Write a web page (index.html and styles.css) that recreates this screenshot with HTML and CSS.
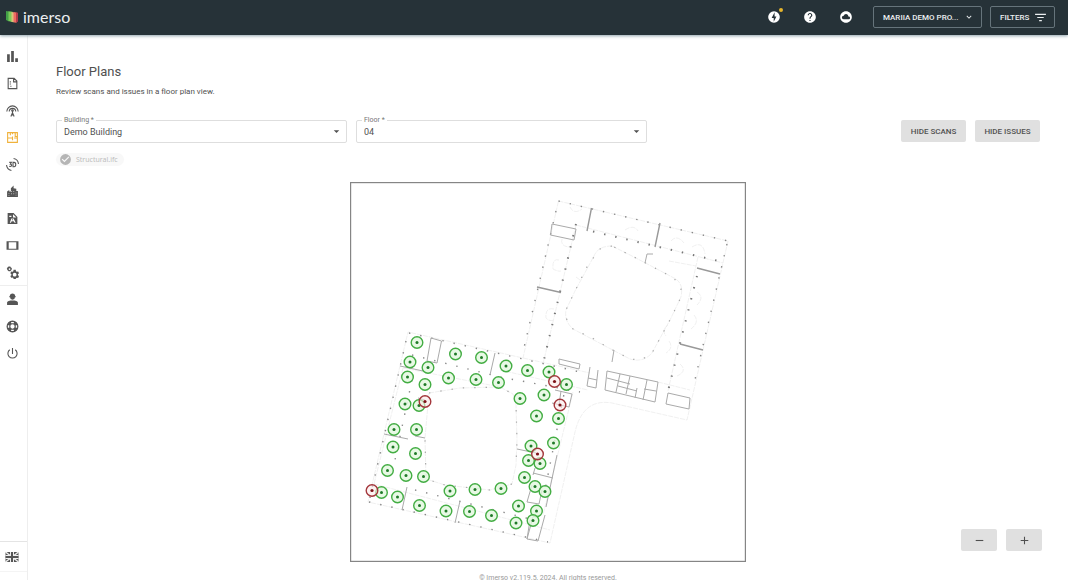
FILE: index.html
```html
<!DOCTYPE html>
<html lang="en">
<head>
<meta charset="utf-8">
<title>Floor Plans</title>
<link rel="stylesheet" href="styles.css">
</head>
<body>
<header class="topbar">
  <a class="brand" href="#">
    <svg class="brand-mark" viewBox="0 0 14 14" aria-hidden="true">
      <path d="M1 1l3 .5v10L1 10z" fill="#43a047"/><path d="M3.500 1.200l4 .6v10.400l-4-1.200z" fill="#7ccb5a"/><path d="M6.500 2l3 .4v10.100l-3-.8z" fill="#d9c27a"/><path d="M8.500 2l3 .5v10.500l-3-1z" fill="#ef6b62"/><path d="M11 2.200l2 .5v9l-2 .5z" fill="#b43a4b"/>
    </svg>
    <span class="brand-name">imerso</span>
  </a>
  <div class="actions">
    <button class="round" aria-label="Updates"><svg viewBox="0 0 24 24"><path d="M12 2a10 10 0 1 0 0 20 10 10 0 0 0 0-20zm-.5 18v-6.200H8L13 4v7h3.200z"/></svg><span class="badge"></span></button>
    <button class="round" aria-label="Help"><svg viewBox="0 0 24 24"><path d="M12 2C6.480 2 2 6.480 2 12s4.480 10 10 10 10-4.480 10-10S17.520 2 12 2zm1 17h-2v-2h2v2zm2.070-7.750l-.9.920C13.450 12.900 13 13.500 13 15h-2v-.5c0-1.100.450-2.100 1.170-2.830l1.240-1.260c.370-.360.590-.860.590-1.410 0-1.100-.9-2-2-2s-2 .9-2 2H8c0-2.210 1.790-4 4-4s4 1.790 4 4c0 .880-.360 1.680-.930 2.250z"/></svg></button>
    <button class="round" aria-label="Cloud"><svg viewBox="0 0 24 24"><path d="M12 2C6.480 2 2 6.480 2 12s4.480 10 10 10 10-4.480 10-10S17.520 2 12 2zm4.500 14H8c-1.660 0-3-1.340-3-3s1.340-3 3-3l.14.010A4 4 0 0 1 12 7c2.210 0 4 1.790 4 4h.5a2.500 2.500 0 0 1 0 5z"/></svg></button>
    <div class="outlined-group">
      <button class="outlined project">MARIIA DEMO PRO...<svg viewBox="0 0 24 24"><path d="M16.600 8.600L12 13.200 7.400 8.600 6 10l6 6 6-6z"/></svg></button>
      <button class="outlined">FILTERS<svg class="filter-icon" viewBox="0 0 24 24"><path d="M9.500 19h5v-2.200h-5V19zM2 5v2.200h20V5H2zm4 8.100h12v-2.200H6v2.200z"/></svg></button>
    </div>
  </div>
</header>
<div class="shell">
  <nav class="sidebar" aria-label="Main">
    <div class="nav-group">
      <a href="#" aria-label="Dashboard"><svg viewBox="0 0 24 24"><path d="M2 8h5v14H2zM9.500 2h5v20h-5zM17 15h5v7h-5z"/></svg></a>
      <a href="#" aria-label="Reports"><svg viewBox="0 0 24 24" class="line"><path d="M4 2.500h11l5 5v14H4zM14 3v6h6M8 8v2M8 12v2M8 17h2"/></svg></a>
      <a href="#" aria-label="Scans"><svg viewBox="0 0 24 24" class="line"><path d="M1.500 14a10.500 10.500 0 1 1 21 0M6 14a6 6 0 1 1 12 0M12 12v4M12 16l-3 7M12 16l3 7M10 20h4"/><circle cx="12" cy="12" r="1.500"/></svg></a>
      <a href="#" class="active" aria-label="Floor plans"><svg viewBox="0 0 24 24" class="line"><path d="M3 3h18v18H3zM3 13h9v-3M12 3v3M12 13v4M17 3v7h4M12 21v-1M15 13h6M8 3v5"/></svg></a>
      <a href="#" aria-label="3D view"><svg viewBox="0 0 24 24" class="line"><path d="M14 1a11 11 0 0 1 9 10M10 23A11 11 0 0 1 1 13M6 8h4l-2 3.500c4 0 3 5-2 4M13 8v8h2c4 0 4-8 0-8z"/></svg></a>
      <a href="#" aria-label="Buildings"><svg viewBox="0 0 24 24"><path fill-rule="evenodd" d="M2 22V12l4-3v3h3V6l5-5v5l5 1v4h3v11zm3-7v1.500h1V15zm0 4v1.500h1V19zm5-8v2h1v-2zm0 4v2h1v-2zm4-4v2h1v-2zm0 4v2h1v-2zm4-1v1.500h1V14zm0 4v1.500h1V18z"/></svg></a>
      <a href="#" aria-label="Documents"><svg viewBox="0 0 24 24"><path fill-rule="evenodd" d="M3 2h11l7 7v13H3zm10 2v6h6zM7 20h2l1.500-3H14l2 3h2l-4-8h-2l1 3h-2l1-3h-2zM6 7v2h4V7z"/></svg></a>
      <a href="#" aria-label="Devices"><svg viewBox="0 0 24 24"><path fill-rule="evenodd" d="M1 4h22v16H1zm4 2v12h14V6z"/></svg></a>
      <a href="#" aria-label="Settings"><svg viewBox="0 0 24 24"><path fill-rule="evenodd" d="M5 1h3l.5 1.500L10 3l1 2-1 2.500L8 9.500H5L3 8 1.500 5 3 2.500zM6.500 4a1.500 1.500 0 1 0 0 3.200 1.500 1.500 0 0 0 0-3.200zM14 7h4l.5 2.500L20 10.500l2.500-.5 1.500 3.500-2 1.500v2l2 1.500-1.500 3.500-2.500-.5-1.500 1L18 24h-4l-.5-2-1.500-1-2.500.5L8 18.500 10 17v-2l-2-1.500L9.500 10l2.500.5 1.500-1zM16 12.500a3.500 3.500 0 1 0 0 7 3.500 3.500 0 0 0 0-7z"/></svg></a>
    </div>
    <div class="nav-group lower">
      <a href="#" aria-label="Account"><svg viewBox="0 0 24 24"><path d="M7 5.500c1-6 9-6 10 0l1 1V8h-1.500a4.500 4.500 0 0 1-9 0H6V6.500zM2 22v-4c0-3 5-4 10-4s10 1 10 4v4z"/></svg></a>
      <a href="#" aria-label="Support"><svg viewBox="0 0 24 24"><path fill-rule="evenodd" d="M12 1a11 11 0 1 0 0 22 11 11 0 0 0 0-22zm0 7a4 4 0 1 1 0 8 4 4 0 0 1 0-8zM9.500 3.500h5V6h-5zM9.500 18h5v2.500h-5zM3.500 9.500H6v5H3.500zM18 9.500h2.500v5H18z"/></svg></a>
      <a href="#" aria-label="Log out"><svg viewBox="0 0 24 24" class="line"><path d="M12 2v11M7 5a8.500 8.500 0 1 0 10 0"/></svg></a>
    </div>
    <div class="language">
      <a href="#" aria-label="English"><svg viewBox="0 0 28 24"><path fill="#555" d="M1 2h26v20H1z"/><path d="M1 2l26 20M27 2L1 22" stroke="#eee" stroke-width="3"/><path d="M14 2v20M1 12h26" stroke="#eee" stroke-width="8"/><path d="M14 2v20M1 12h26" stroke="#555" stroke-width="4"/></svg></a>
    </div>
  </nav>
  <main class="content">
    <h1>Floor Plans</h1>
    <p class="intro">Review scans and issues in a floor plan view.</p>
    <div class="controls">
      <div class="field"><label for="building">Building *</label>
        <select id="building"><option>Demo Building</option></select>
        <svg viewBox="0 0 24 24" aria-hidden="true"><path d="M6 9l6 6 6-6z"/></svg></div>
      <div class="field"><label for="floor">Floor *</label>
        <select id="floor"><option>04</option></select>
        <svg viewBox="0 0 24 24" aria-hidden="true"><path d="M6 9l6 6 6-6z"/></svg></div>
      <div class="toggles"><button class="grey">HIDE SCANS</button><button class="grey">HIDE ISSUES</button></div>
    </div>
    <button class="chip"><svg viewBox="0 0 24 24"><path d="M12 2a10 10 0 1 0 0 20 10 10 0 0 0 0-20zm-2 15l-5-5 1.500-1.500L10 14l7.500-7.500L19 8z"/></svg>Structural.ifc</button>
    <svg class="plan" viewBox="350 182 396 380" role="img" aria-label="Floor 04 plan">
      <defs>
        <g id="s"><circle r="5.800" fill="#e2f8df" fill-opacity=".8" stroke="#43ad43" stroke-width="1.400"/><circle r="1.500" fill="#1f7a28"/></g>
        <g id="i"><circle r="5.800" fill="#fbeaea" fill-opacity=".6" stroke="#a3363b" stroke-width="1.400"/><circle r="1.600" fill="#7d1218"/></g>
      </defs>
      <rect x="350.500" y="182.500" width="395" height="379" fill="#fff" stroke="#858585" stroke-width="1.400"/>
      <g class="faint">
        <path d="M558.500 201L728 241L687 420L612 403Q583 398 575 432L550 543L368 502L408 332L523 358Z"/>
        <path d="M612 246Q598 246 594 256L575 291L566 310Q564 321 573 329L607 347L630 359Q643 363 652 353L671 318L681 297Q684 283 674 278L634 257Z"/>
        <path d="M429 393L460 388L500 387L513 394L516 405L517 440L516 465L512 484L490 490L445 485L426 479L425 438Z"/>
        <path d="M576 225L723 263M576 225L543 364M698 257L668 391M523 358L590 373M658 382L690 390M403 368L500 387M403 368L374 484M374 484L550 530M573 392L543 515M500 370L588 390"/>
        <path d="M570 207q4 8 12 2M562 239q-2 8 9 8M559 260q-7-2-6 9q6 3 8 2M554 309q-9-2-8 9q4 4 8 2M671 241q6-7 13 2M692 247q11-7 13 7M697 292q8 5 0 13M694 315q6 7-3 14M669 341q5 7-3 12M668 325q-7 5-2 11M680 364q8 7-3 12M625 230q9-6 13 1M669 261l27 5M580 280l-4-3"/>
      </g>
      <g class="marks">
        <path d="M558.500 201L728 241"/><path d="M556 211L523 352"/><path d="M727 244L693 388"/>
        <path d="M409 333L580 372"/><path d="M406 341L369 502"/><path d="M369 502L548 542"/><path d="M415 490L530 519"/><path d="M412 355L500 377L580 392"/><path d="M412 380L395 460"/><path d="M566 384L545 490"/>
        <path class="bold" d="M593 231.500L723 262"/><path class="bold" d="M576 224L543 364"/><path class="bold" d="M697 276L668 391"/>
        <path class="wide" d="M612 246L600 249L588 265L575 291L566 310L566 318L573 329L594 339L607 347L630 359L641 360L652 353L671 318L681 297L681 289L674 278L634 257Z"/>
        <path class="wide" d="M429 393L460 388L500 387L513 394L516 405L517 440L516 465M512 484L490 490L445 485L426 479L425 438"/>
      </g>
      <g class="walls">
        <path class="heavy" d="M591.500 208L587 231M537 287L561 292.500M660 223L655 247M697 268L720 274M680 344L703 350"/>
        <path d="M552 224L576 229L574 240L550.500 235ZM645 263L647 254H653M614 350L612 362" />
        <path d="M559 359L580 364L579 369L559 364ZM668 393L690 398L689 409L666 404ZM590 367L587 386L596 388L598 370M588 378L597 380M607 371L658 382L655 402L605 390ZM620 374L616 392M630 376L626 394M647 380L643 400M644 389L656 391M637 388L635 398M607 378L630 384M618 386L637 391"/>
        <path d="M431 338L441.500 341L437 363L427 361ZM400 366L423 371M384 434L408 439M415 436L425 438M407 487L402 510M460 501L455 523M495 353L490 375M517 449L536 453M533 473L553 478M557 455L546 507M535 468L533 475M542 490L539 504L527 502L532 485M530 520L527 539L538 541L545 515M527 539L533 517M555 390L572 394L569 407L552 403M561 391L559 405M418 398L425 400"/>
      </g>
      <g>
        <use href="#s" x="417" y="342.500"/><use href="#s" x="455.500" y="354"/><use href="#s" x="481.500" y="357.500"/><use href="#s" x="410" y="362"/><use href="#s" x="428" y="367.500"/><use href="#s" x="407.500" y="377"/><use href="#s" x="425" y="384.500"/><use href="#s" x="448.500" y="378"/><use href="#s" x="476" y="379.500"/><use href="#s" x="498.500" y="382.500"/><use href="#s" x="506" y="366"/><use href="#s" x="527.500" y="370.500"/><use href="#s" x="549" y="372"/><use href="#s" x="566.500" y="384.500"/><use href="#s" x="544" y="395"/><use href="#s" x="520" y="398.500"/><use href="#s" x="536.500" y="416"/><use href="#s" x="558.500" y="418.500"/><use href="#s" x="405" y="404"/><use href="#s" x="419" y="405.500"/><use href="#s" x="394" y="429.500"/><use href="#s" x="416.500" y="429.500"/><use href="#s" x="393" y="447"/><use href="#s" x="415.500" y="453.500"/><use href="#s" x="387.500" y="470.500"/><use href="#s" x="406" y="475.500"/><use href="#s" x="423.500" y="476.500"/><use href="#s" x="381.500" y="492.500"/><use href="#s" x="397.500" y="497"/><use href="#s" x="419.500" y="505.500"/><use href="#s" x="450" y="491"/><use href="#s" x="475" y="489.500"/><use href="#s" x="501" y="488.500"/><use href="#s" x="446" y="511"/><use href="#s" x="469.500" y="511.500"/><use href="#s" x="491.500" y="515.500"/><use href="#s" x="518.500" y="506"/><use href="#s" x="536.500" y="511"/><use href="#s" x="516" y="523"/><use href="#s" x="533" y="520.500"/><use href="#s" x="524.500" y="477.500"/><use href="#s" x="535" y="486.500"/><use href="#s" x="545" y="491.500"/><use href="#s" x="528.500" y="460.500"/><use href="#s" x="540" y="463.500"/><use href="#s" x="531" y="446"/><use href="#s" x="553.500" y="443"/>
        <use href="#i" x="425" y="401.500"/><use href="#i" x="554.500" y="381.500"/><use href="#i" x="560" y="405"/><use href="#i" x="537.500" y="454"/><use href="#i" x="372" y="490.500"/>
      </g>
    </svg>
    <footer>© Imerso v2.119.5, 2024. All rights reserved.</footer>
    <div class="zoom"><button class="grey" aria-label="Zoom out"><svg viewBox="0 0 24 24"><path d="M5 11h14v2H5z"/></svg></button><button class="grey" aria-label="Zoom in"><svg viewBox="0 0 24 24"><path d="M5 11h6V5h2v6h6v2h-6v6h-2v-6H5z"/></svg></button></div>
  </main>
</div>
</body>
</html>
```
FILE: styles.css
```css
* { box-sizing: border-box; }
body {
  margin: 0;
  height: 100vh;
  display: flex;
  flex-direction: column;
  overflow: hidden;
  font-family: Roboto, "Liberation Sans", sans-serif;
  font-size: 8px;
  color: #505050;
  background: #fff;
}
button, select { font: inherit; color: inherit; }
button { border: 0; padding: 0; background: none; cursor: pointer; }
a { color: inherit; text-decoration: none; }
svg { fill: currentColor; }

.topbar {
  flex: none;
  height: 35px;
  display: flex;
  align-items: center;
  justify-content: space-between;
  padding: 0 13px 1px 5px;
  background: #263238;
  color: #fff;
  box-shadow: 0 1px 3px #90a4ae;
  z-index: 1;
}
.brand { display: flex; align-items: center; gap: 4px; }
.brand-mark { width: 14px; height: 14px; }
.brand-name { font: 16px/20px Lato, sans-serif; color: #eceff1; }
.actions { display: flex; align-items: center; gap: 12px; }
.round { position: relative; width: 24px; height: 24px; display: grid; place-items: center; }
.round svg { width: 14px; height: 14px; }
.badge { position: absolute; top: 3px; right: 3px; width: 4px; height: 4px; border-radius: 50%; background: #e5b52c; }
.outlined-group { display: flex; gap: 8px; margin-left: 3px; }
.outlined {
  min-width: 65px;
  height: 22px;
  display: flex;
  align-items: center;
  justify-content: space-between;
  gap: 4px;
  padding: 0 7px 0 9px;
  border: 1px solid #66747b;
  border-radius: 2px;
  font-weight: 500;
  color: #eceff1;
}
.outlined.project { min-width: 109px; }
.outlined svg { width: 10px; height: 10px; }
.outlined .filter-icon { width: 13px; height: 13px; }

.shell { flex: 1; min-height: 0; display: flex; }
.sidebar { flex: none; width: 28px; display: flex; flex-direction: column; padding-top: 8px; border-right: 1px solid #eee; }
.nav-group { display: flex; flex-direction: column; }
.nav-group a { height: 27px; padding-right: 3px; display: grid; place-items: center; color: #555; }
.nav-group svg { width: 13px; height: 13px; }
.nav-group .active { color: #f0b23c; }
.lower { box-shadow: 0 -1px #eee; }
.line { fill: none; stroke: currentColor; stroke-width: 2; }
.language { margin-top: auto; margin-bottom: 8px; height: 31px; padding-right: 3px; display: grid; place-items: center; border-top: 1px solid #e4e4e4; border-bottom: 1px solid #f4f4f4; }
.language svg { width: 14px; height: 12px; display: block; }

.content { position: relative; flex: 1; min-width: 0; display: flex; flex-direction: column; padding: 28px 28px 0; }
h1 { margin: 0; font-size: 13px; line-height: 18px; font-weight: 400; }
.intro { margin: 4px 0 0; line-height: 14px; }
.controls { display: flex; gap: 9px; margin-top: 21px; }
.field { position: relative; flex: 0 1 291px; }
.field label { position: absolute; top: -5px; left: 6px; padding: 0 2px; font-size: 7px; line-height: 10px; background: #fff; color: #777; }
.field select { width: 100%; height: 23px; padding: 0 7px; border: 1px solid #dedede; border-radius: 2px; appearance: none; background: #fff; font-size: 9px; }
.field svg { position: absolute; right: 5px; top: 6px; width: 11px; height: 11px; pointer-events: none; }
.toggles { display: flex; gap: 9px; margin-left: auto; }
.grey { height: 22px; padding: 0 9px; border-radius: 2px; background: #e0e0e0; font-weight: 500; }
.toggles .grey { min-width: 65px; }
.chip { align-self: flex-start; display: flex; align-items: center; gap: 4px; height: 16px; margin-top: 10px; padding: 0 6px 0 3px; border-radius: 8px; background: #f8f8f8; color: #bdbdbd; font-family: "Noto Sans", sans-serif; font-size: 7px; }
.chip svg { width: 13px; height: 13px; fill: #b5b5b5; }
.plan { flex: none; align-self: center; width: 100%; max-width: 396px; margin-top: 16px; }
.faint { fill: none; stroke: #e6e6e6; stroke-width: .6; stroke-dasharray: 5 1; }
.marks { fill: none; stroke: #888; stroke-width: 1.4; stroke-dasharray: 1.4 10; }
.marks .wide { stroke: #aaa; stroke-width: 1.2; }
.marks .bold { stroke: #777; stroke-width: 2; }
.walls { fill: none; stroke: #aaa; stroke-width: 1; }
.walls .heavy { stroke: #999; stroke-width: 1.4; }
footer { margin-top: 11px; text-align: center; font-size: 7px; line-height: 10px; color: #999; }
.zoom { position: absolute; right: 26px; bottom: 29px; display: flex; gap: 9px; }
.zoom .grey { width: 36px; display: grid; place-items: center; }
.zoom svg { width: 13px; height: 13px; }
```
